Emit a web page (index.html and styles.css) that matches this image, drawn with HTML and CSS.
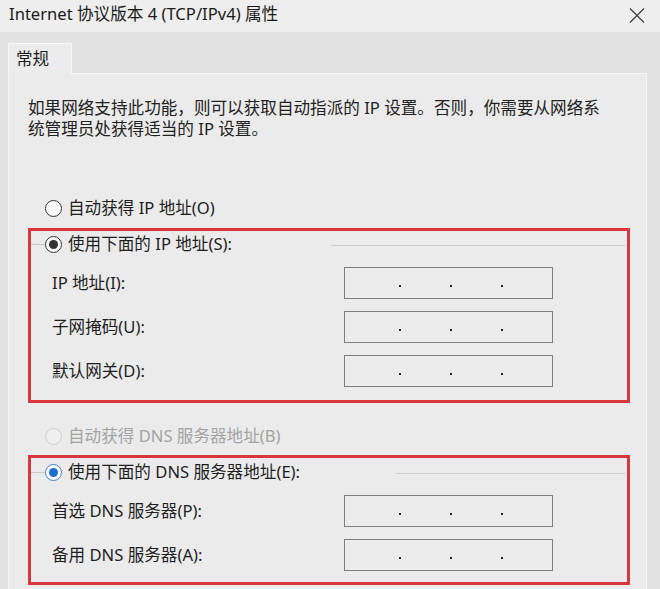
FILE: index.html
```html
<!DOCTYPE html>
<html lang="zh-CN">
<head>
<meta charset="utf-8">
<title>Internet 协议版本 4 (TCP/IPv4) 属性</title>
<link rel="stylesheet" href="styles.css">
</head>
<body>
<div class="window">
  <div class="titlebar">
    <span class="title">Internet 协议版本 4 (TCP/IPv4) 属性</span>
    <svg class="close" width="16" height="15" viewBox="0 0 16 15" aria-hidden="true">
      <path d="M1 0.5 L15 14.5 M15 0.5 L1 14.5" stroke="#3a3a3a" stroke-width="1.1" fill="none"/>
    </svg>
  </div>
  <div class="client">
    <div class="tabs"><div class="tab">常规</div></div>
    <div class="panel">
      <p class="intro">如果网络支持此功能，则可以获取自动指派的 IP 设置。否则，你需要从网络系<br>统管理员处获得适当的 IP 设置。</p>

      <div class="radio-row standalone"><span class="radio"></span><span class="rlabel">自动获得 IP 地址(O)</span></div>

      <div class="group group-ip">
        <div class="group-head">
          <span class="lead-line"></span><span class="radio checked"></span><span class="rlabel">使用下面的 IP 地址(S):</span><span class="tail-line tail-ip"></span>
        </div>
        <div class="field"><span class="flabel">IP 地址(I):</span><div class="ipbox"><i></i><i></i><i></i></div></div>
        <div class="field"><span class="flabel">子网掩码(U):</span><div class="ipbox"><i></i><i></i><i></i></div></div>
        <div class="field"><span class="flabel">默认网关(D):</span><div class="ipbox"><i></i><i></i><i></i></div></div>
      </div>

      <div class="radio-row standalone disabled"><span class="radio"></span><span class="rlabel">自动获得 DNS 服务器地址(B)</span></div>

      <div class="group group-dns">
        <div class="group-head">
          <span class="lead-line"></span><span class="radio checked blue"></span><span class="rlabel">使用下面的 DNS 服务器地址(E):</span><span class="tail-line tail-dns"></span>
        </div>
        <div class="field"><span class="flabel">首选 DNS 服务器(P):</span><div class="ipbox"><i></i><i></i><i></i></div></div>
        <div class="field"><span class="flabel">备用 DNS 服务器(A):</span><div class="ipbox"><i></i><i></i><i></i></div></div>
      </div>
    </div>
  </div>
</div>
</body>
</html>
```

FILE: styles.css
```css
html, body {
  margin: 0;
  padding: 0;
}
body {
  width: 660px;
  height: 589px;
  overflow: hidden;
  font-family: "Noto Sans", "Noto Sans CJK SC", sans-serif;
  font-size: 16.6px;
  color: #1e1e1e;
}
.window {
  width: 660px;
  height: 589px;
  display: flex;
  flex-direction: column;
  overflow: hidden;
}
.titlebar {
  height: 32px;
  flex: none;
  background: #eeeeee;
  display: flex;
  align-items: center;
  justify-content: space-between;
  padding: 0 15px 4px 9px;
  box-sizing: border-box;
}
.title {
  color: #1a1a1a;
  line-height: 22px;
  white-space: nowrap;
}
.close {
  display: block;
  margin-top: 2px;
}
.client {
  flex: 1;
  background: #e2e2e2;
  padding: 11px 13px 0 8px;
  display: flex;
  flex-direction: column;
  min-height: 0;
}
.tabs {
  display: flex;
  height: 30px;
  flex: none;
}
.tab {
  width: 64px;
  box-sizing: border-box;
  height: 31px;
  background: #ececec;
  border: 1px solid #f8f8f8;
  border-bottom: none;
  padding: 2px 0 0 7px;
  line-height: 26px;
  position: relative;
  z-index: 1;
}
.panel {
  flex: 1;
  background: #ebebeb;
  border: 1px solid #f6f6f6;
  border-bottom: none;
  padding: 0 0 0 19px;
  min-height: 0;
}
.intro {
  margin: 23px 0 0 0;
  line-height: 21px;
  white-space: nowrap;
  color: #222;
}
.radio-row {
  display: flex;
  align-items: center;
  height: 22px;
}
.standalone {
  padding-left: 17px;
  margin-top: 58px;
}
.standalone.disabled {
  margin-top: 22px;
}
.radio {
  width: 17px;
  height: 17px;
  box-sizing: border-box;
  border: 1px solid #333;
  border-radius: 50%;
  background: #f9f9f9;
  flex: none;
  display: flex;
  align-items: center;
  justify-content: center;
}
.radio.checked::after {
  content: "";
  width: 9px;
  height: 9px;
  border-radius: 50%;
  background: #333;
}
.radio.blue {
  border-color: #3f7fcf;
  background: #fdfdfd;
}
.radio.blue::after {
  background: #1d6fcf;
}
.rlabel {
  margin-left: 6px;
  line-height: 22px;
  white-space: nowrap;
}
.disabled .radio {
  border-color: #cdcdcd;
  background: #efefef;
}
.disabled .rlabel {
  color: #a3a3a3;
}
.group {
  width: 602px;
  box-sizing: border-box;
  border: 3px solid #d9363e;
  padding: 2px 2px 13px 0;
}
.group-ip {
  margin-top: 9px;
}
.group-dns {
  margin-top: 8px;
  padding-top: 3px;
  padding-bottom: 11px;
}
.group-head {
  display: flex;
  align-items: center;
  height: 22px;
}
.lead-line {
  width: 14px;
  height: 1px;
  background: #c9c9c9;
  flex: none;
}
.tail-line {
  flex: 1;
  height: 1px;
  background: #cdcdcd;
  margin-top: 2px;
}
.tail-ip {
  margin-left: 99px;
}
.tail-dns {
  margin-left: 96px;
}
.field {
  display: grid;
  grid-template-columns: 292px 209px;
  align-items: center;
  padding-left: 21px;
  margin-top: 12px;
  height: 32px;
}
.flabel {
  white-space: nowrap;
  line-height: 22px;
}
.ipbox {
  height: 32px;
  box-sizing: border-box;
  border: 1px solid #7d7d7d;
  background: #ececec;
  display: flex;
  align-items: center;
  gap: 49px;
  padding: 6px 0 0 54px;
}
.ipbox i {
  display: block;
  width: 2px;
  height: 2px;
  background: #222;
}
```
